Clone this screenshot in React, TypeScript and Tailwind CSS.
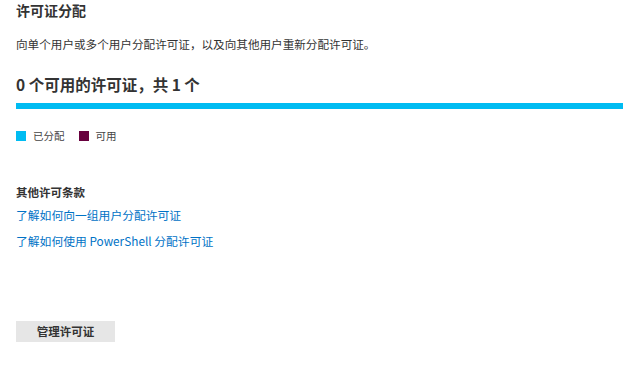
export default function App() {
  return (
    <div
      className="min-h-[375px] w-[643px] bg-white pl-4 pr-5 text-[#333333]"
      style={{ fontFamily: '"Noto Sans CJK SC", "Noto Sans", sans-serif' }}
    >
      <h1 className="text-[14px] font-bold leading-[20px]">许可证分配</h1>
      <p className="mt-[14px] text-[11.6px] leading-[20px]">
        向单个用户或多个用户分配许可证，以及向其他用户重新分配许可证。
      </p>
      <h2 className="mt-[18px] text-[15.5px] font-bold leading-[24px]">0 个可用的许可证，共 1 个</h2>
      <div className="mt-[7px] h-[6px] w-full bg-[#00bcf2]" />

      <div className="mt-[19px] flex items-center text-[10.5px] leading-[16px] text-[#444444]">
        <span className="h-[10px] w-[10px] bg-[#00bcf2]" />
        <span className="ml-[7px]">已分配</span>
        <span className="ml-[14px] h-[10px] w-[10px] bg-[#68003e]" />
        <span className="ml-[7px]">可用</span>
      </div>

      <h3 className="mt-[40px] text-[11.5px] font-bold leading-[16px]">其他许可条款</h3>
      <div className="flex flex-col items-start text-[11.8px] leading-[20px] text-[#0072c6]">
        <a className="mt-[5px] cursor-pointer">了解如何向一组用户分配许可证</a>
        <a className="mt-[6px] cursor-pointer">了解如何使用 PowerShell 分配许可证</a>
      </div>

      <button className="mt-[70px] flex h-[21px] w-[99px] items-center justify-center bg-[#e6e6e6] text-[11.5px] font-bold text-[#333333]">
        管理许可证
      </button>
    </div>
  )
}
